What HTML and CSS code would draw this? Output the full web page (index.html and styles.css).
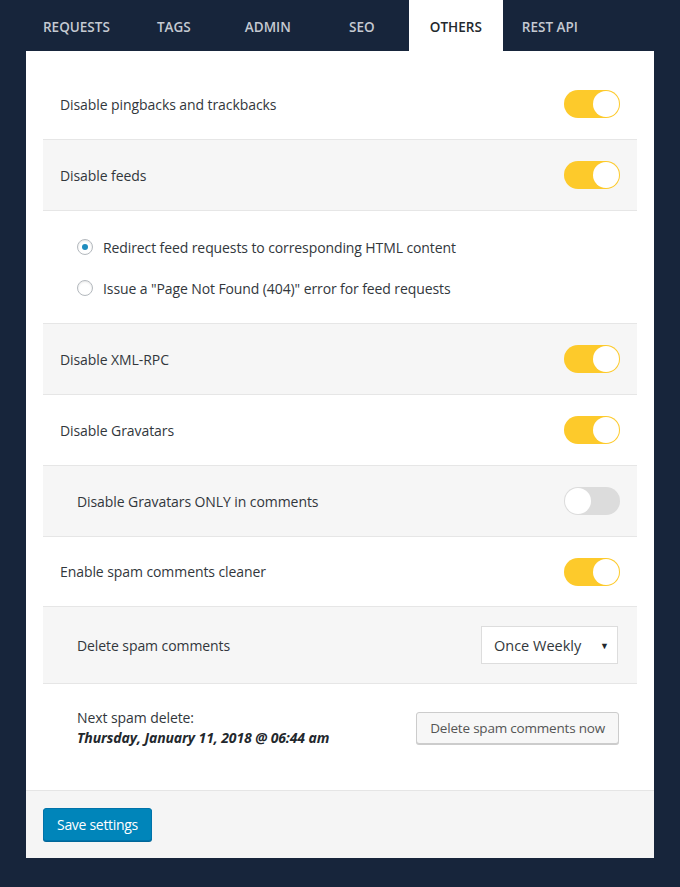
FILE: index.html
```html
<!DOCTYPE html>
<html lang="en">
<head>
<meta charset="utf-8">
<title>Settings - Others</title>
<link rel="stylesheet" href="styles.css">
</head>
<body>
<nav class="tabs">
  <a class="tab">Requests</a>
  <a class="tab">Tags</a>
  <a class="tab">Admin</a>
  <a class="tab">SEO</a>
  <a class="tab active">Others</a>
  <a class="tab">REST API</a>
</nav>
<main class="panel">
  <div class="content">
    <div class="row">
      <span class="label">Disable pingbacks and trackbacks</span>
      <span class="toggle on"><span class="knob"></span></span>
    </div>
    <div class="row grey">
      <span class="label">Disable feeds</span>
      <span class="toggle on"><span class="knob"></span></span>
    </div>
    <div class="radios">
      <label class="radio-item"><span class="radio checked"></span>Redirect feed requests to corresponding HTML content</label>
      <label class="radio-item"><span class="radio"></span>Issue a "Page Not Found (404)" error for feed requests</label>
    </div>
    <div class="row grey">
      <span class="label">Disable XML-RPC</span>
      <span class="toggle on"><span class="knob"></span></span>
    </div>
    <div class="row">
      <span class="label">Disable Gravatars</span>
      <span class="toggle on"><span class="knob"></span></span>
    </div>
    <div class="row grey sub">
      <span class="label">Disable Gravatars ONLY in comments</span>
      <span class="toggle"><span class="knob"></span></span>
    </div>
    <div class="row short">
      <span class="label">Enable spam comments cleaner</span>
      <span class="toggle on"><span class="knob"></span></span>
    </div>
    <div class="row grey sub select-row">
      <span class="label">Delete spam comments</span>
      <span class="select"><span class="select-value">Once Weekly</span><span class="select-arrow">▼</span></span>
    </div>
    <div class="row sub next-row">
      <div class="next">
        <div class="label">Next spam delete:</div>
        <div class="date">Thursday, January 11, 2018 @ 06:44 am</div>
      </div>
      <button class="btn-secondary" type="button">Delete spam comments now</button>
    </div>
  </div>
  <div class="footer">
    <button class="btn-primary" type="button">Save settings</button>
  </div>
</main>
</body>
</html>
```

FILE: styles.css
```css
* { box-sizing: border-box; }

body {
  margin: 0;
  background: #17253b;
  font-family: "Open Sans", "Noto Sans", sans-serif;
  color: #32373c;
  height: 887px;
}

.tabs {
  display: flex;
  padding-left: 26px;
  height: 51px;
}

.tab {
  min-width: 94px;
  padding: 2px 17px 0;
  display: flex;
  align-items: center;
  justify-content: center;
  text-transform: uppercase;
  font-size: 13.5px;
  font-weight: 600;
  color: #c5cad2;
  letter-spacing: 0;
}

.tab.active {
  background: #fff;
  color: #23282d;
}

.panel {
  margin: 0 26px;
  background: #fff;
}

.content {
  padding: 18px 17px 18px;
}

.row {
  display: flex;
  align-items: center;
  justify-content: space-between;
  height: 71px;
  padding: 0 17px;
  border-bottom: 1px solid #e6e6e6;
}

.row.short { height: 70px; }
.row.grey { background: #f6f6f6; }
.row.sub { padding-left: 34px; }

.label {
  font-size: 14px;
  letter-spacing: -0.08px;
  color: #32373c;
}

.toggle {
  width: 56px;
  height: 28px;
  border-radius: 14px;
  background: #dcdcdc;
  display: flex;
  align-items: center;
  padding: 0 1px;
}

.toggle.on {
  background: #fdca2b;
  justify-content: flex-end;
}

.knob {
  width: 26px;
  height: 26px;
  border-radius: 50%;
  background: #fff;
}

.radios {
  display: flex;
  flex-direction: column;
  gap: 21px;
  padding: 26px 17px 25px 34px;
  border-bottom: 1px solid #e6e6e6;
}

.radio-item {
  display: flex;
  align-items: center;
  height: 20px;
  font-size: 14px;
  letter-spacing: -0.1px;
  color: #32373c;
}

.radio {
  width: 16px;
  height: 16px;
  border-radius: 50%;
  border: 1px solid #b4b9be;
  background: #fff;
  box-shadow: inset 0 1px 2px rgba(0,0,0,0.1);
  margin-right: 10px;
  display: flex;
  align-items: center;
  justify-content: center;
}

.radio.checked::after {
  content: "";
  width: 6px;
  height: 6px;
  border-radius: 50%;
  background: #1e8cbe;
}

.select-row { height: 77px; padding-right: 19px; }

.select {
  width: 137px;
  height: 38px;
  border: 1px solid #dddddd;
  background: #fff;
  display: flex;
  align-items: center;
  justify-content: space-between;
  padding: 0 8px 0 12px;
  font-size: 14.5px;
  color: #32373c;
}

.select-arrow {
  font-size: 9px;
  color: #23282d;
}

.next-row {
  height: 88px;
  border-bottom: none;
  padding-right: 18px;
}

.next .label { line-height: 20px; }

.date {
  font-size: 14px;
  font-weight: 700;
  font-style: italic;
  line-height: 20px;
  color: #23282d;
  letter-spacing: -0.1px;
}

.btn-secondary {
  height: 32px;
  padding: 0 13px;
  background: #f7f7f7;
  border: 1px solid #cccccc;
  border-radius: 3px;
  box-shadow: 0 1px 0 #cccccc;
  font-family: inherit;
  font-size: 13.5px;
  color: #555;
  letter-spacing: -0.2px;
}

.footer {
  background: #f5f5f5;
  border-top: 1px solid #e5e5e5;
  padding: 17px 17px 17px;
}

.btn-primary {
  height: 33px;
  padding: 0 13px;
  background: #0085ba;
  border: 1px solid #0073aa;
  border-radius: 3px;
  box-shadow: 0 1px 0 #006799;
  color: #fff;
  font-family: inherit;
  font-size: 14px;
  letter-spacing: -0.3px;
}
```
